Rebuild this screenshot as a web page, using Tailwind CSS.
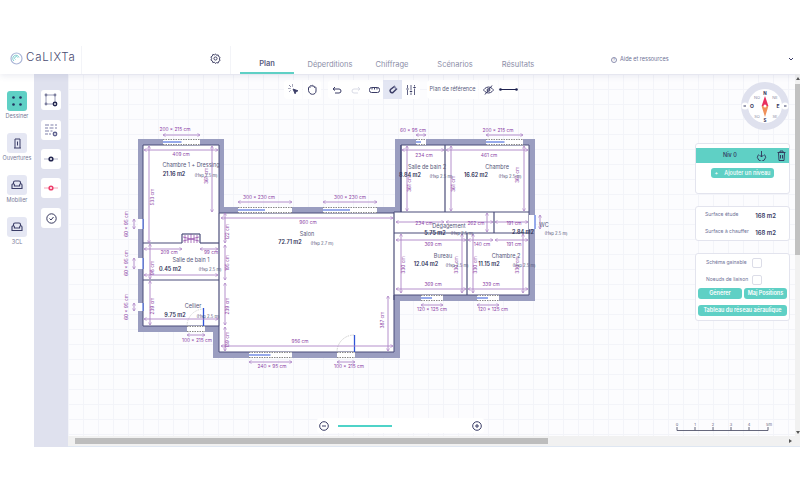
<!DOCTYPE html>
<html lang="fr">
<head>
  <meta charset="UTF-8" />
  <title>Calixta - Plan</title>
  <script src="https://cdn.jsdelivr.net/npm/@tailwindcss/browser@4"></script>
</head>
<body class="bg-white overflow-hidden font-['Inter',sans-serif] text-[#3a3c66]">
<div class="w-[800px] h-[500px] flex flex-col">

  <!-- Header -->
  <header class="h-[74px] shrink-0 flex items-end bg-white shadow-[0_2px_6px_rgba(90,95,150,0.12)] relative z-10">
    <div class="w-[82px] h-[28px] border-r border-[#f3f4f8] flex items-center pl-[10px] gap-[3px] pb-[4px]">
      <svg width="13" height="13" viewBox="0 0 13 13" fill="none"><circle cx="6.5" cy="6.5" r="5.5" stroke="#a9b4d6" stroke-width="1.2"/><path d="M4 9a3.2 3.2 0 1 1 5-3.500M5.500 7.500a1.500 1.500 0 1 1 2-2" stroke="#7fcfd0" stroke-width="1"/></svg>
      <span class="text-[11.5px] leading-none font-light tracking-[0.8px] text-[#4a4c72]">CaLIXTa</span>
    </div>
    <div class="w-[149px] h-[28px] border-r border-[#f3f4f8] flex items-center justify-end pr-[9px] pb-[4px]">
      <svg width="11" height="11" viewBox="0 0 24 24" fill="none" stroke="#34365c" stroke-width="2"><circle cx="12" cy="12" r="3.400"/><path d="M12 2l2.200 3 3.600-.9 1 3.600 3.200 1.900-1.600 3.400 1.600 3.400-3.200 1.900-1 3.600-3.600-.9L12 23l-2.200-3-3.600.9-1-3.600-3.200-1.900L3.600 12 2 8.600l3.200-1.900 1-3.600 3.600.9z"/></svg>
    </div>
    <nav class="flex pl-[9px] text-[7.5px] text-[#8c8ea8]">
      <a class="w-[54px] h-[21px] pt-[2px] flex items-center justify-center font-semibold text-[#5a5c80] border-b-2 border-[#5fd0c5]">Plan</a>
      <a class="w-[72px] h-[21px] pt-[2px] flex items-center justify-center">Déperditions</a>
      <a class="w-[52px] h-[21px] pt-[2px] flex items-center justify-center">Chiffrage</a>
      <a class="w-[74px] h-[21px] pt-[2px] flex items-center justify-center">Scénarios</a>
      <a class="w-[52px] h-[21px] pt-[2px] flex items-center justify-center">Résultats</a>
    </nav>
    <div class="absolute left-[611px] top-[56px] flex items-center gap-[3px] text-[5.5px] leading-[7px] text-[#6e7196]">
      <span class="w-[6px] h-[6px] rounded-full border border-[#8d90b0] flex items-center justify-center text-[4px] leading-none">?</span>
      <span>Aide et ressources</span>
    </div>
    <svg class="absolute left-[788px] top-[57px]" width="6" height="4" viewBox="0 0 6 4" fill="none" stroke="#3a3c66" stroke-width="1"><path d="M1 1l2 2 2-2"/></svg>
  </header>

  <!-- Main -->
  <main class="h-[373px] shrink-0 flex">
    <!-- Sidebar categories -->
    <aside class="w-[34px] bg-white flex flex-col items-center pt-[17px] text-[5.5px] text-[#777a98]">
      <button class="w-[20px] h-[20px] rounded-[3px] bg-[#5fd0c5] flex items-center justify-center">
        <svg width="10" height="10" viewBox="0 0 10 10" fill="#23315e"><circle cx="1.500" cy="1.500" r="1.300"/><circle cx="8.500" cy="1.500" r="1.300"/><circle cx="1.500" cy="8.500" r="1.300"/><circle cx="8.500" cy="8.500" r="1.300"/></svg>
      </button>
      <span class="h-[22px] pt-[2px] leading-[7px]">Dessiner</span>
      <button class="w-[20px] h-[20px] rounded-[3px] bg-[#e5e7f3] flex items-center justify-center">
        <svg width="9" height="11" viewBox="0 0 9 11" fill="none" stroke="#3a3c66"><path d="M2 10V1h5v9M1 10h7M4.500 3.500v4"/></svg>
      </button>
      <span class="h-[22px] pt-[2px] leading-[7px]">Ouvertures</span>
      <button class="w-[20px] h-[20px] rounded-[3px] bg-[#e5e7f3] flex items-center justify-center">
        <svg width="12" height="10" viewBox="0 0 12 10" fill="none" stroke="#3a3c66" stroke-width="1.100"><path d="M2.500 4V2.500a1.500 1.500 0 0 1 1.500-1.500h4a1.500 1.500 0 0 1 1.500 1.500V4M1 5a1.200 1.200 0 0 1 2.400 0v1h5.200V5A1.200 1.200 0 0 1 11 5v3.500H1z"/></svg>
      </button>
      <span class="h-[22px] pt-[2px] leading-[7px]">Mobilier</span>
      <button class="w-[20px] h-[20px] rounded-[3px] bg-[#e5e7f3] flex items-center justify-center">
        <svg width="12" height="10" viewBox="0 0 12 10" fill="none" stroke="#3a3c66" stroke-width="1.100"><path d="M2.500 4V2.500a1.500 1.500 0 0 1 1.500-1.500h4a1.500 1.500 0 0 1 1.500 1.500V4M1 5a1.200 1.200 0 0 1 2.400 0v1h5.200V5A1.200 1.200 0 0 1 11 5v3.500H1z"/></svg>
      </button>
      <span class="pt-[2px] leading-[7px]">3CL</span>
    </aside>

    <!-- Sub tools -->
    <aside class="w-[34px] bg-[#dfe1ee] flex flex-col items-center pt-[16px]">
      <button class="w-[20px] h-[20px] mb-[10px] rounded-[3px] bg-white flex items-center justify-center">
        <svg width="14" height="14" viewBox="0 0 14 14" fill="none"><path d="M2 2h9M2 2v9M2 11h7M11 2v7" stroke="#9a9cb8"/><circle cx="2" cy="2" r="1.400" fill="#7d7f9e"/><circle cx="11" cy="2" r="1.400" fill="#7d7f9e"/><circle cx="2" cy="11" r="1.400" fill="#7d7f9e"/><circle cx="11" cy="11" r="2.400" fill="#23264f"/><circle cx="11" cy="11" r=".9" fill="#fff"/></svg>
      </button>
      <button class="w-[20px] h-[20px] mb-[9px] rounded-[3px] bg-white flex items-center justify-center">
        <svg width="14" height="14" viewBox="0 0 14 14" fill="none"><path d="M1 2h4M6.500 2h3M11 2h2M1 5h3M5.500 5h4M11 5h2M1 8h4M6.500 8h2M1 11h3M5 11h2" stroke="#a9abc6" stroke-width="1.300"/><circle cx="11" cy="11" r="2.400" fill="#5f6290"/><circle cx="11" cy="11" r=".9" fill="#fff"/></svg>
      </button>
      <button class="w-[20px] h-[20px] mb-[9px] rounded-[3px] bg-white flex items-center justify-center">
        <svg width="14" height="8" viewBox="0 0 14 8" fill="none"><path d="M0 4h14" stroke="#b5b7cc"/><circle cx="7" cy="4" r="2.600" fill="#23264f"/><circle cx="7" cy="4" r="1" fill="#fff"/></svg>
      </button>
      <button class="w-[20px] h-[20px] mb-[10px] rounded-[3px] bg-white flex items-center justify-center">
        <svg width="14" height="8" viewBox="0 0 14 8" fill="none"><path d="M0 4h14" stroke="#f3a5b8"/><circle cx="7" cy="4" r="2.600" fill="#ee3f6c"/><circle cx="7" cy="4" r="1" fill="#fff"/></svg>
      </button>
      <button class="w-[20px] h-[20px] rounded-[3px] bg-white flex items-center justify-center">
        <svg width="11" height="11" viewBox="0 0 11 11" fill="none" stroke="#34365c"><circle cx="5.500" cy="5.500" r="4.700"/><path d="M3.500 5.500l1.500 1.500 2.500-3"/></svg>
      </button>
    </aside>

    <!-- Canvas -->
    <section class="relative w-[732px] overflow-hidden bg-[#fcfcfe] bg-[linear-gradient(#f3f4f9_1px,transparent_1px),linear-gradient(90deg,#f3f4f9_1px,transparent_1px)] bg-[size:15px_15px]">
      <svg id="plan" class="absolute inset-0" width="732" height="373" viewBox="68 74 732 373" font-family="Inter, sans-serif"></svg>

      <!-- Toolbar -->
      <div class="absolute left-[216px] top-[6px] h-[19px] flex gap-[7px]">
        <div class="flex gap-px">
          <button class="w-[18px] h-[19px] bg-white rounded-l-[4px] flex items-center justify-center">
            <svg width="11" height="11" viewBox="0 0 11 11" fill="none" stroke="#3a3c66" stroke-width=".9"><path d="M5 5l5 1.800-2 .8-.9 2.200z" fill="#3a3c66"/><path d="M1 1l1.800 1.800M4.500 .5v2M.5 4.500h2M1.500 7.500l1.300-1.300" stroke-dasharray="1 .6"/></svg>
          </button>
          <button class="w-[18px] h-[19px] bg-white rounded-r-[4px] flex items-center justify-center">
            <svg width="10" height="11" viewBox="0 0 10 11" fill="none" stroke="#3a3c66"><path d="M1.500 6.500V3.500a.8.8 0 0 1 1.500 0V2.200a.8.8 0 0 1 1.500 0V1.800a.8.8 0 0 1 1.500 0v.8a.8.8 0 0 1 1.500 0v1a.8.8 0 0 1 1.500 0V7c0 2-1.500 3.300-3.500 3.300S2 9 1.500 6.500z"/></svg>
          </button>
        </div>
        <div class="flex">
          <button class="w-[18px] h-[19px] bg-white rounded-l-[4px] flex items-center justify-center">
            <svg width="10" height="8" viewBox="0 0 10 8" fill="none" stroke="#3a3c66"><path d="M3 1L1 3l2 1.500M1 3h6a2 2 0 0 1 0 4H3"/></svg>
          </button>
          <button class="w-[19px] h-[19px] bg-white flex items-center justify-center">
            <svg width="10" height="8" viewBox="0 0 10 8" fill="none" stroke="#d9dbe6"><path d="M7 1l2 2-2 1.500M9 3H3a2 2 0 0 0 0 4h4"/></svg>
          </button>
          <button class="w-[18px] h-[19px] bg-white flex items-center justify-center">
            <svg width="11" height="6" viewBox="0 0 11 6" fill="none" stroke="#3a3c66"><rect x=".5" y=".5" width="10" height="5" rx="2"/><path d="M3 .5v2M5.500 .5v2M8 .5v2"/></svg>
          </button>
          <button class="w-[19px] h-[19px] bg-[#e3e6f3] flex items-center justify-center">
            <svg width="10" height="10" viewBox="0 0 10 10" fill="none" stroke="#3a3c66" stroke-width="1.500"><path d="M7 1L2.500 4.500a2 2 0 0 0 2.500 3L9 3.500"/><path d="M6 1.500l2.500 2.500" stroke="#7f83a8"/></svg>
          </button>
          <button class="w-[18px] h-[19px] bg-white rounded-r-[4px] flex items-center justify-center">
            <svg width="10" height="10" viewBox="0 0 10 10" fill="none" stroke="#3a3c66" stroke-width=".8"><path d="M1.500 0v3M1.500 5v5M5 0v5.500M5 7.500V10M8.500 0v1.500M8.500 3.500V10"/><path d="M.3 4h2.400M3.800 6.500h2.400M7.300 2.500h2.400" stroke-width="1.200"/></svg>
          </button>
        </div>
        <div class="flex">
          <button class="w-[51px] h-[19px] bg-white rounded-l-[4px] text-[5.5px] text-[#5b5d7e] whitespace-nowrap flex items-center justify-center">Plan de référence</button>
          <button class="w-[19px] h-[19px] ml-px bg-white flex items-center justify-center">
            <svg width="11" height="10" viewBox="0 0 11 10" fill="none" stroke="#3a3c66"><path d="M.5 5S2.500 2 5.500 2s5 3 5 3-2 3-5 3-5-3-5-3zM9 .5L2 9.500"/><circle cx="5.500" cy="5" r="1.400"/></svg>
          </button>
          <button class="w-[19px] h-[19px] ml-px bg-white rounded-r-[4px] flex items-center justify-center">
            <svg width="19" height="5" viewBox="0 0 19 5" fill="#1f2350"><rect x="1" y="2" width="17" height="1"/><circle cx="1.500" cy="2.500" r="1.300"/><circle cx="17.500" cy="2.500" r="1.300"/></svg>
          </button>
        </div>
      </div>

      <!-- Compass -->
      <svg class="absolute left-[672px] top-[8px]" width="50" height="50" viewBox="0 0 50 50" font-family="Inter, sans-serif" text-anchor="middle">
        <circle cx="25" cy="24" r="24" fill="#dfe1ee"/>
        <circle cx="25" cy="24" r="17" fill="#fff"/>
        <circle cx="5" cy="24" r="3.500" fill="#fff"/>
        <circle cx="45" cy="24" r="3.500" fill="#fff"/>
        <rect x="3.500" y="23.500" width="2.500" height="1" fill="#3a3c66"/>
        <rect x="44" y="23.500" width="2.500" height="1" fill="#3a3c66"/>
        <path d="M25 14l3.400 10h-6.800z" fill="#e8305f"/>
        <path d="M25 35l3.400-11h-6.800z" fill="#f0915a"/>
        <circle cx="25" cy="24" r="1.500" fill="#fff"/>
        <text x="25" y="13" font-size="4.500" font-weight="700" fill="#2f3158">N</text>
        <text x="25" y="40" font-size="4.500" font-weight="700" fill="#2f3158">S</text>
        <text x="12" y="26" font-size="5" font-weight="700" fill="#2f3158">O</text>
        <text x="38" y="26" font-size="5" font-weight="700" fill="#2f3158">E</text>
        <text x="17" y="17" font-size="4" fill="#8a8ca6">NO</text>
        <text x="35" y="17" font-size="4" fill="#8a8ca6">NE</text>
        <text x="17" y="36" font-size="4" fill="#8a8ca6">SO</text>
        <text x="35" y="36" font-size="4" fill="#8a8ca6">SE</text>
      </svg>

      <!-- Right panel -->
      <div class="absolute left-[627px] top-[69px] w-[95px] flex flex-col gap-[12px]">
        <div class="h-[51px] bg-white rounded-[3px] border border-[#e3e4ee] pt-[4px] flex flex-col items-center">
          <div class="w-full h-[15px] bg-[#5fd0c5] flex items-center text-[5.500px] font-medium text-[#2f3158] pl-[27px] relative">
            <span>Niv 0</span>
            <svg class="absolute left-[60px] top-[2px]" width="11" height="11" viewBox="0 0 11 11" fill="none" stroke="#2f3158" stroke-width=".9"><path d="M5.500 1v6M3.500 5l2 2 2-2M2.500 4.500a4 4 0 1 0 6 0"/></svg>
            <svg class="absolute left-[81px] top-[2px]" width="9" height="11" viewBox="0 0 9 11" fill="none" stroke="#2f3158" stroke-width=".9"><path d="M.5 2.500h8M3 2.500V1h3v1.500M1.500 2.500l.5 8h5l.5-8M3.500 5v3.500M5.500 5v3.500"/></svg>
          </div>
          <button class="mt-[5px] w-[63px] h-[10px] rounded-[3px] bg-[#5fd0c5] text-white text-[5.500px] font-medium whitespace-nowrap flex items-center justify-center gap-[6px]"><span>+</span><span>Ajouter un niveau</span></button>
        </div>
        <div class="h-[35px] bg-white rounded-[3px] border border-[#e3e4ee] pl-[9px] pr-[13px] py-[1px] flex flex-col justify-between text-[5px] text-[#6e7196]">
          <div class="flex justify-between items-center h-[14px]"><span>Surface étude</span><span class="text-[6px] font-semibold text-[#3a3c66]">168 m2</span></div>
          <div class="flex justify-between items-center h-[14px]"><span>Surface à chauffer</span><span class="text-[6px] font-semibold text-[#3a3c66]">168 m2</span></div>
        </div>
        <div class="h-[68px] bg-white rounded-[3px] border border-[#e3e4ee] px-[2px] pt-[4px] text-[5px] text-[#6e7196]">
          <div class="flex items-center h-[10px] pl-[8px]"><span class="w-[46px]">Schéma gainable</span><span class="w-[10px] h-[10px] rounded-[2px] border border-[#dcdde8]"></span></div>
          <div class="flex items-center h-[10px] mt-[7px] pl-[8px]"><span class="w-[46px] whitespace-nowrap">Noeuds de liaison</span><span class="w-[10px] h-[10px] rounded-[2px] border border-[#dcdde8]"></span></div>
          <div class="flex gap-[2px] mt-[3px] text-white text-[5.500px] font-semibold">
            <button class="w-[44px] h-[11px] rounded-[3px] bg-[#5fd0c5]">Générer</button>
            <button class="w-[43px] h-[11px] rounded-[3px] bg-[#5fd0c5]">Maj Positions</button>
          </div>
          <button class="w-[89px] h-[11px] mt-[6px] rounded-[3px] bg-[#5fd0c5] text-white text-[5.500px] font-semibold">Tableau du réseau aéraulique</button>
        </div>
      </div>

      <!-- Zoom -->
      <div class="absolute left-[249px] top-[344px] w-[167px] h-[15px] bg-white rounded-[3px] flex items-center px-[1px]">
        <svg class="ml-[1px]" width="10" height="10" viewBox="0 0 10 10" fill="none" stroke="#3a3c66"><circle cx="5" cy="5" r="4.300"/><path d="M3 5h4"/></svg>
        <span class="ml-[9px] w-[54px] h-[2px] bg-[#4fd3c8]"></span>
        <svg class="ml-auto mr-[1px]" width="10" height="10" viewBox="0 0 10 10" fill="none" stroke="#3a3c66"><circle cx="5" cy="5" r="4.300"/><path d="M3 5h4M5 3v4"/></svg>
      </div>

      <!-- Scale -->
      <svg class="absolute left-[604px] top-[347px]" width="104" height="14" viewBox="0 0 104 14" font-family="Inter, sans-serif" font-size="4" fill="#66687f" text-anchor="middle">
        <path d="M5 6v3.500h91V6M23 6v3.500M41 6v3.500M59 6v3.500M77 6v3.500" fill="none" stroke="#55576e" stroke-width=".9"/>
        <text x="5" y="5">0</text><text x="23" y="5">1</text><text x="41" y="5">2</text><text x="59" y="5">3</text><text x="77" y="5">4</text><text x="97" y="5">5m</text>
      </svg>

      <!-- Scrollbars -->
      <div class="absolute right-0 top-0 bottom-[11px] w-[5px] bg-[#f1f1f1]">
        <svg class="absolute left-[1px] top-[3px]" width="4" height="3" viewBox="0 0 4 3" fill="#555"><path d="M2 0l2 3H0z"/></svg>
        <div class="mt-[10px] h-[171px] bg-[#c1c1c1]"></div>
        <svg class="absolute left-[1px] bottom-[2px]" width="4" height="3" viewBox="0 0 4 3" fill="#555"><path d="M2 3l2-3H0z"/></svg>
      </div>
      <div class="absolute left-0 right-0 bottom-px h-[10px] bg-[#f1f1f1]">
        <div class="ml-[7px] w-[473px] h-[6px] mt-[2px] bg-[#bdbdbd]"></div>
        <svg class="absolute right-[8px] top-[3px]" width="3" height="4" viewBox="0 0 3 4" fill="#555"><path d="M3 2L0 0v4z"/></svg>
      </div>
      <div class="absolute left-0 right-0 bottom-0 h-px bg-[#dfe7f2]"></div>
    </section>
  </main>
</div>

<script>
  const WALL = '#9a9dc0', LINE = '#4b4d7a', DIM = '#ad84c6', TXT = '#8b3fa5', BLUE = '#2f54d8';
  let out = '';

  // outer shell, then rooms carved out in white
  out += `<path fill="${WALL}" d="M138 139H224V207H395V139H535V301H400V358H213V332H138Z"/>`;
  out += `<path fill="#fff" stroke="${LINE}" stroke-width="1" d="M143 145H219V213H394V212H401V145H529V295H394V352H219V326H143Z"/>`;

  // inner walls
  const walls = [
    [143,243,182,243],[200,243,219,243],[182,234,200,234],[182,234,182,243],[200,234,200,243],
    [143,280,219,280],[219,213,219,326],
    [401,212,529,212],[445,145,445,212],[494,212,494,233],[394,233,529,233],[467,233,467,295],[394,213,394,300],[401,145,401,212]
  ];
  walls.forEach(w => out += `<line x1="${w[0]}" y1="${w[1]}" x2="${w[2]}" y2="${w[3]}" stroke="${LINE}" stroke-width="1.200"/>`);
  out += `<path d="M185 235v8M188 235v8M191 234v9M194 235v8M197 235v8M183 237l16 4M183 241l16-4" stroke="${TXT}" stroke-width=".7"/>`;

  // windows: x, y, w, h
  const windows = [
    [163,139,37,6],[238,207,54,6],[323,207,54,6],[249,352,43,6],[337,352,18,6],[187,326,18,6],
    [416,139,10,6],[486,139,37,6],[421,295,22,6],[477,295,22,6],
    [138,219,5,10],[138,258,5,11],[138,303,5,8],[529,215,6,14]
  ];
  windows.forEach(r => {
    out += `<rect x="${r[0]}" y="${r[1]}" width="${r[2]}" height="${r[3]}" fill="#fff"/>`;
    if (r[2] > r[3]) {
      out += `<line x1="${r[0]}" y1="${r[1]+.5}" x2="${r[0]+r[2]}" y2="${r[1]+.5}" stroke="#555" stroke-width=".7" stroke-dasharray="1.500 1"/>`;
      out += `<line x1="${r[0]}" y1="${r[1]+r[3]-.5}" x2="${r[0]+r[2]}" y2="${r[1]+r[3]-.5}" stroke="#555" stroke-width=".7" stroke-dasharray="1.500 1"/>`;
      if (r[2] != 18) out += `<line x1="${r[0]}" y1="${r[1]+3}" x2="${r[0]+r[2]*.5}" y2="${r[1]+3}" stroke="${BLUE}" stroke-width="1"/>`;
    } else {
      out += `<line x1="${r[0]+r[2]}" y1="${r[1]}" x2="${r[0]+r[2]}" y2="${r[1]+r[3]}" stroke="${BLUE}" stroke-width="1"/>`;
    }
  });

  // door leaves
  out += `<line x1="354.500" y1="335" x2="354.500" y2="352" stroke="${BLUE}" stroke-width="1.300"/><path d="M337 352A17 17 0 0 1 354 335" fill="none" stroke="#aaa" stroke-width=".6" stroke-dasharray="1.500 1"/>`;
  out += `<line x1="203.500" y1="308" x2="203.500" y2="326" stroke="${BLUE}" stroke-width="1.300"/><path d="M187 326A17 17 0 0 1 203 309" fill="none" stroke="#bbb" stroke-width=".6" stroke-dasharray="1.500 1"/>`;

  // dimension arrows: x1, y1, x2, y2
  const dims = [
    [163,135,200,135],[144,150,218,150],[149,146,149,243],[212,146,212,212],[134,219,134,229],[134,258,134,269],[134,303,134,311],
    [144,249,182,249],[200,249,218,249],[144,275,218,275],[150,244,150,279],[150,281,150,325],[144,319,218,319],[187,335,205,335],
    [238,202,292,202],[323,202,377,202],[221,218,393,218],[221,346,393,346],[249,362,292,362],[337,362,355,362],[388,296,388,351],
    [225,213,225,243],[225,245,225,280],[225,283,225,325],[225,327,225,351],
    [416,135,426,135],[486,135,523,135],[402,150,444,150],[446,150,528,150],[407,146,407,211],[451,146,451,211],[524,146,524,211],
    [396,222,444,222],[446,222,493,222],[495,222,528,222],[487,213,487,232],[540,215,540,229],
    [396,240,466,240],[468,240,493,240],[495,240,528,240],[396,289,466,289],[468,289,528,289],[401,234,401,293],[462,234,462,293],[473,234,473,293],[523,234,523,293],
    [421,305,443,305],[477,305,499,305]
  ];
  dims.forEach(d => {
    out += `<line x1="${d[0]}" y1="${d[1]}" x2="${d[2]}" y2="${d[3]}" stroke="${DIM}" stroke-width=".9"/>`;
    const a = d[1] == d[3]
      ? `M${d[0]+2.500} ${d[1]-1.500}L${d[0]} ${d[1]}L${d[0]+2.500} ${d[1]+1.500}M${d[2]-2.500} ${d[3]-1.500}L${d[2]} ${d[3]}L${d[2]-2.500} ${d[3]+1.500}`
      : `M${d[0]-1.500} ${d[1]+2.500}L${d[0]} ${d[1]}L${d[0]+1.500} ${d[1]+2.500}M${d[2]-1.500} ${d[3]-2.500}L${d[2]} ${d[3]}L${d[2]+1.500} ${d[3]-2.500}`;
    out += `<path d="${a}" fill="none" stroke="${DIM}" stroke-width=".7"/>`;
  });

  // dimension labels: text, x, y, vertical
  const labels = [
    ['200 x 215 cm',175,131],['409 cm',181,156],['533 cm',154,197,1],['361 cm',208,176,1],
    ['60 x 95 cm',128,224,1],['60 x 95 cm',128,263,1],['60 x 95 cm',128,307,1],
    ['209 cm',169,254],['99 cm',211,254],['98 cm',154,268,1],['239 cm',154,306,1],['100 x 215 cm',197,342],
    ['300 x 230 cm',259,199],['300 x 230 cm',350,199],['960 cm',308,224],['956 cm',300,343],['240 x 95 cm',272,368],['100 x 215 cm',349,368],['387 cm',384,320,1],
    ['122 cm',229,232,1],['195 cm',229,263,1],['239 cm',229,306,1],['139 cm',229,340,1],
    ['60 x 95 cm',413,132],['200 x 215 cm',498,132],['234 cm',424,157],['461 cm',489,157],['361 cm',411,184,1],['361 cm',455,184,1],['361 cm',519,175,1],
    ['234 cm',424,225],['262 cm',476,225],['191 cm',514,225],['369 cm',433,246],['140 cm',482,246],['191 cm',514,246],['369 cm',433,286],['339 cm',491,286],
    ['330 cm',405,265,1],['330 cm',458,265,1],['330 cm',477,265,1],['330 cm',519,265,1],['120 x 125 cm',432,311],['120 x 125 cm',493,311]
  ];
  labels.forEach(l => {
    const t = l[3] ? ` transform="rotate(-90 ${l[1]} ${l[2]})"` : '';
    out += `<text x="${l[1]}" y="${l[2]}" text-anchor="middle" font-size="4.800" fill="${TXT}"${t}>${l[0]}</text>`;
  });

  // room names, area, ceiling height
  const rooms = [
    ['Chambre 1 + Dressing',191,167,'21.16 m2',174,176,206,177],
    ['Salle de bain 1',191,262,'0.45 m2',170,271,210,271],
    ['Cellier',193,308,'9.75 m2',175,317,208,318],
    ['Salon',307,236,'72.71 m2',290,244,322,245],
    ['Salle de bain 2',427,169,'8.84 m2',410,177,441,178],
    ['Chambre',497,169,'16.62 m2',476,177,510,178],
    ['Dégagement',449,228,'5.75 m2',435,235,462,235],
    ['Bureau',443,258,'12.04 m2',426,266,457,267],
    ['Chambre 2',506,258,'11.15 m2',489,266,524,267]
  ];
  rooms.forEach(r => {
    out += `<text x="${r[1]}" y="${r[2]}" text-anchor="middle" font-size="5.500" fill="#55577a">${r[0]}</text>`;
    out += `<text x="${r[4]}" y="${r[5]}" text-anchor="middle" font-size="5.500" font-weight="600" fill="#2f3158">${r[3]}</text>`;
    out += `<text x="${r[6]}" y="${r[7]}" text-anchor="middle" font-size="4.200" fill="#55577a">(Hsp 2.${r[0] == 'Salon' ? 7 : 5} m)</text>`;
  });
  out += `<text x="544" y="227" text-anchor="middle" font-size="5.500" fill="#55577a">WC</text>`;
  out += `<text x="523" y="234" text-anchor="middle" font-size="5.500" font-weight="600" fill="#2f3158">2.84 m2</text>`;
  out += `<text x="556" y="235" text-anchor="middle" font-size="4.200" fill="#55577a">(Hsp 2.5 m)</text>`;

  document.getElementById('plan').innerHTML = out;
</script>
</body>
</html>
